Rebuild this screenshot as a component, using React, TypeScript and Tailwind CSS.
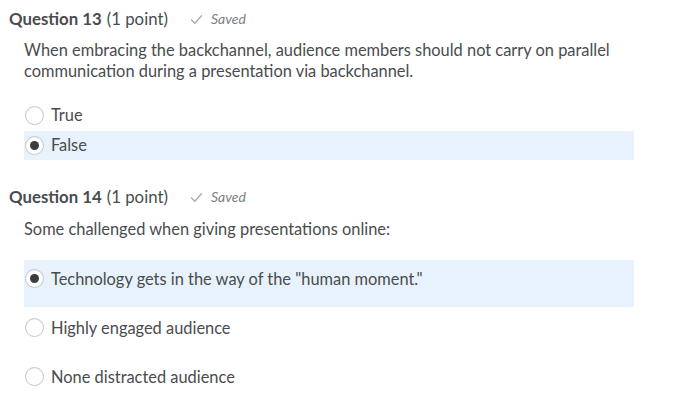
import React from 'react';

type Option = { label: string; checked?: boolean };

function Radio({ checked }: { checked?: boolean }) {
  return (
    <span className="flex h-[19px] w-[19px] shrink-0 items-center justify-center rounded-full border border-[#c4c7c9] bg-white shadow-[inset_0_1px_1px_rgba(0,0,0,0.06)]">
      {checked && <span className="h-[9px] w-[9px] rounded-full bg-[#3a3d40]" />}
    </span>
  );
}

function Header({ num }: { num: number }) {
  return (
    <div className="flex items-center text-[16.8px] leading-[20px] text-[#494c4e]">
      <span className="font-bold">Question {num}</span>
      <span className="ml-[5px]">(1 point)</span>
      <span className="ml-[22px] flex items-center gap-[8px] text-[14px] italic text-[#7a7e81]">
        <svg width="13" height="11" viewBox="0 0 13 11" fill="none">
          <path d="M1.5 6 L4.8 9.2 L11.5 1.8" stroke="#a8acaf" strokeWidth="1.4" strokeLinecap="round" strokeLinejoin="round" />
        </svg>
        Saved
      </span>
    </div>
  );
}

export default function App() {
  const q13: Option[] = [{ label: 'True' }, { label: 'False', checked: true }];
  const q14: Option[] = [
    { label: 'Technology gets in the way of the "human moment."', checked: true },
    { label: 'Highly engaged audience' },
    { label: 'None distracted audience' },
  ];

  return (
    <div className="h-[413px] w-[700px] bg-white pl-[9px] pt-[9px]" style={{ fontFamily: 'Lato, "Open Sans", sans-serif' }}>
      {/* Question 13 */}
      <Header num={13} />
      <p className="mt-[10px] ml-[15px] w-[610px] text-[16.4px] leading-[21px] text-[#494c4e]">
        When embracing the backchannel, audience members should not carry on parallel communication during a presentation via backchannel.
      </p>
      <div className="mt-[20px] ml-[15px] w-[610px]">
        {q13.map((o) => (
          <div
            key={o.label}
            className={`flex h-[29px] items-center gap-[7px] pl-[1px] text-[16.4px] text-[#494c4e] ${o.checked ? 'bg-[#e8f2fc]' : ''} ${o.checked ? 'mt-[1px]' : ''}`}
          >
            <Radio checked={o.checked} />
            <span>{o.label}</span>
          </div>
        ))}
      </div>

      {/* Question 14 */}
      <div className="mt-[27px]">
        <Header num={14} />
      </div>
      <p className="mt-[11px] ml-[15px] text-[16.4px] leading-[21px] text-[#494c4e]">
        Some challenged when giving presentations online:
      </p>
      <div className="mt-[21px] ml-[15px] w-[610px]">
        {q14.map((o) => (
          <div
            key={o.label}
            className={`mb-[2px] flex h-[47px] items-start gap-[7px] pl-[1px] pt-[9px] text-[16.4px] leading-[19px] text-[#494c4e] ${o.checked ? 'bg-[#e8f2fc]' : ''}`}
          >
            <Radio checked={o.checked} />
            <span>{o.label}</span>
          </div>
        ))}
      </div>
    </div>
  );
}
